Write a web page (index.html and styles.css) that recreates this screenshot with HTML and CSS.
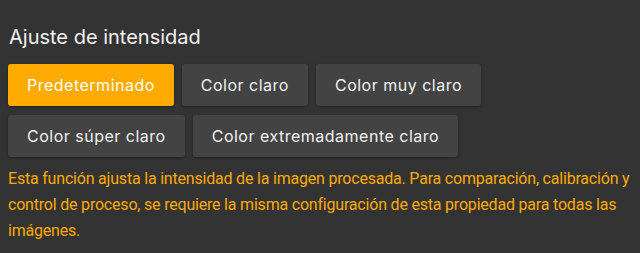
FILE: index.html
```html
<!DOCTYPE html>
<html lang="es">
<head>
  <meta charset="UTF-8">
  <meta name="viewport" content="width=device-width, initial-scale=1">
  <title>Ajuste de intensidad</title>
  <link rel="stylesheet" href="styles.css">
</head>
<body>
  <h2 class="titulo">Ajuste de intensidad</h2>
  <div class="opciones">
    <button class="opcion activa">Predeterminado</button>
    <button class="opcion">Color claro</button>
    <button class="opcion">Color muy claro</button>
    <button class="opcion">Color súper claro</button>
    <button class="opcion">Color extremadamente claro</button>
  </div>
  <p class="nota">Esta función ajusta la intensidad de la imagen procesada. Para comparación, calibración y control de proceso, se requiere la misma configuración de esta propiedad para todas las imágenes.</p>
</body>
</html>
```
FILE: styles.css
```css
body {
  margin: 0;
  padding: 24px 8px 0;
  background: #333333;
  color: #f2f2f2;
  font-family: Inter, "Noto Sans", sans-serif;
}
.titulo {
  margin: 0 0 14px 1px;
  font-size: 20px;
  font-weight: 400;
  line-height: 26px;
}
.opciones {
  display: flex;
  flex-wrap: wrap;
  gap: 9px 8px;
  max-width: 500px;
}
.opcion {
  height: 42px;
  padding: 0 19px;
  font-family: inherit;
  font-size: 16px;
  letter-spacing: 0.5px;
  color: #f2f2f2;
  background: #434343;
  border: none;
  border-radius: 3px;
  box-shadow: 0 1px 3px rgba(0,0,0,0.35);
}
.opcion.activa {
  background: #ffaa00;
  color: #fff;
}
.nota {
  margin: 9px 0 0;
  font-family: Roboto, "Noto Sans", sans-serif;
  font-size: 16px;
  letter-spacing: -0.2px;
  line-height: 26px;
  color: #ffaa00;
}
```
